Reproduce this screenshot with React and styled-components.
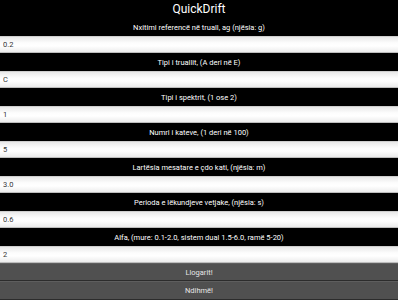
import React, {useState} from "react";
import styled, {createGlobalStyle} from "styled-components";

const GlobalStyle = createGlobalStyle`
  html, body {
    margin: 0;
    padding: 0;
    background: #000;
  }
  body {
    font-family: Roboto, "Liberation Sans", sans-serif;
  }
`;

const Page = styled.div`
  width: 398px;
  height: 300px;
  display: flex;
  flex-direction: column;
  background: #000;
  overflow: hidden;
`;

const Title = styled.h1`
  margin: 0;
  height: 18px;
  display: flex;
  align-items: center;
  justify-content: center;
  color: #fff;
  font-size: 12px;
  font-weight: 400;
`;

const Label = styled.label`
  height: 18px;
  display: flex;
  align-items: center;
  justify-content: center;
  color: #fff;
  font-size: 7.5px;
`;

const Input = styled.input`
  box-sizing: border-box;
  height: 17px;
  width: 100%;
  margin: 0;
  padding: 0 3px;
  border: none;
  border-top: 1px solid #cfcfcf;
  border-bottom: 1px solid #bdbdbd;
  background: linear-gradient(#e9e9e9, #fdfdfd 40%, #fff 60%, #ececec);
  color: #333;
  font-family: Roboto, "Liberation Sans", sans-serif;
  font-size: 7.5px;
  outline: none;
`;

const Button = styled.button`
  box-sizing: border-box;
  height: ${(props) => props.h}px;
  width: 100%;
  margin: 0;
  padding: 0;
  border: none;
  border-bottom: 1px solid #2c2c2c;
  border-top: 1px solid #5e5e5e;
  background: #505050;
  color: #e6e6e6;
  font-family: Roboto, "Liberation Sans", sans-serif;
  font-size: 7.5px;
  cursor: pointer;
`;

const fields = [
    {label: "Nxitimi referencë në truall, ag (njësia: g)", value: "0.2"},
    {label: "Tipi i truallit, (A deri në E)", value: "C"},
    {label: "Tipi i spektrit, (1 ose 2)", value: "1"},
    {label: "Numri i kateve, (1 deri në 100)", value: "5"},
    {label: "Lartësia mesatare e çdo kati, (njësia: m)", value: "3.0"},
    {label: "Perioda e lëkundjeve vetjake, (njësia: s)", value: "0.6"},
    {label: "Alfa, (mure: 0.1-2.0, sistem dual 1.5-6.0, ramë 5-20)", value: "2"}
];

const App = () => {

    const [values, setValues] = useState(fields.map((f) => f.value));

    return (
        <>
            <GlobalStyle/>
            <Page>
                <Title>QuickDrift</Title>
                {fields.map((f, i) => (
                    <React.Fragment key={i}>
                        <Label htmlFor={"f" + i}>{f.label}</Label>
                        <Input id={"f" + i} value={values[i]} onChange={(e) => {
                            const next = [...values];
                            next[i] = e.target.value;
                            setValues(next);
                        }}/>
                    </React.Fragment>
                ))}
                <Button h={18}>Llogarit!</Button>
                <Button h={19}>Ndihmë!</Button>
            </Page>
        </>
    )
}

export default App;
